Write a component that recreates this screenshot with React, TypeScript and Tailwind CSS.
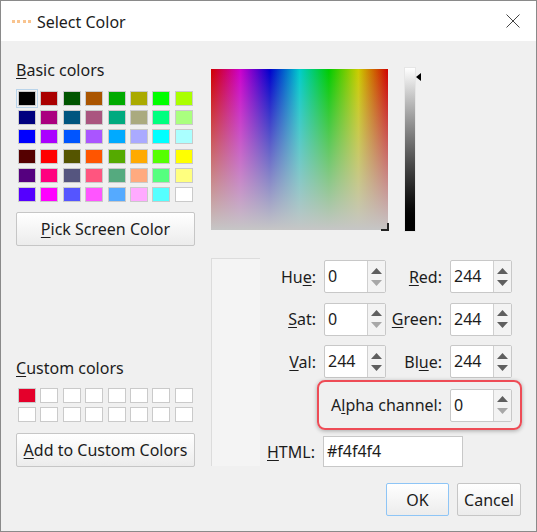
const basic = [
  ['#000000', '#aa0000', '#005500', '#aa5500', '#00aa00', '#aaaa00', '#00ff00', '#aaff00'],
  ['#00007f', '#aa007f', '#00557f', '#aa557f', '#00aa7f', '#aaaa7f', '#00ff7f', '#aaff7f'],
  ['#0000ff', '#aa00ff', '#0055ff', '#aa55ff', '#00aaff', '#aaaaff', '#00ffff', '#aaffff'],
  ['#550000', '#ff0000', '#555500', '#ff5500', '#55aa00', '#ffaa00', '#55ff00', '#ffff00'],
  ['#55007f', '#ff007f', '#55557f', '#ff557f', '#55aa7f', '#ffaa7f', '#55ff7f', '#ffff7f'],
  ['#5500ff', '#ff00ff', '#5555ff', '#ff55ff', '#55aaff', '#ffaaff', '#55ffff', '#ffffff'],
];

const custom = [
  ['#e4002b', '#ffffff', '#ffffff', '#ffffff', '#ffffff', '#ffffff', '#ffffff', '#ffffff'],
  ['#ffffff', '#ffffff', '#ffffff', '#ffffff', '#ffffff', '#ffffff', '#ffffff', '#ffffff'],
];

function Swatches({ rows, selected }: { rows: string[][]; selected?: boolean }) {
  return (
    <div className="flex flex-col gap-[4.2px]">
      {rows.map((row, r) => (
        <div key={r} className="flex gap-[4.4px] pl-[2px]">
          {row.map((c, i) => (
            <div
              key={i}
              className={`w-[18px] h-[15px] border border-[#cacaca] shrink-0 ${
                selected && r === 0 && i === 0 ? 'outline outline-offset-[1px] outline-[#b9d4ea]' : ''
              }`}
              style={{ backgroundColor: c }}
            />
          ))}
        </div>
      ))}
    </div>
  );
}

function Spin({ value, lowDisabled }: { value: string; lowDisabled?: boolean }) {
  return (
    <div className="flex w-[62px] h-[33px] bg-white border border-[#c8c8c8] rounded-[2px] shrink-0">
      <div className="flex-1 pl-[3px] leading-[31px]">{value}</div>
      <div className="w-[18px] flex flex-col items-center justify-center gap-[6px] border-l border-[#d0d0d0] bg-[#f3f3f3]">
        <svg width="11" height="6" viewBox="0 0 11 6">
          <path d="M5.5 0L11 6H0Z" fill="#5f5f5f" />
        </svg>
        <svg width="11" height="6" viewBox="0 0 11 6">
          <path d="M0 0H11L5.5 6Z" fill={lowDisabled ? '#a8a8a8' : '#5f5f5f'} />
        </svg>
      </div>
    </div>
  );
}

function Field({ label, value, lowDisabled }: { label: React.ReactNode; value: string; lowDisabled?: boolean }) {
  return (
    <div className="flex items-center gap-[8px] w-[127px] justify-end">
      <div className="whitespace-nowrap">{label}</div>
      <Spin value={value} lowDisabled={lowDisabled} />
    </div>
  );
}

function PushButton({ children, className = '' }: { children: React.ReactNode; className?: string }) {
  return (
    <div
      className={`flex items-center justify-center border rounded-[2px] bg-gradient-to-b from-white to-[#ececec] ${className}`}
    >
      {children}
    </div>
  );
}

export default function App() {
  return (
    <div
      className="w-[537px] h-[532px] flex flex-col border border-[#8a8a8a] bg-[#f0f0f0] text-[#1c1c1c] text-[16px] overflow-hidden"
      style={{ fontFamily: '"Noto Sans", "Open Sans", sans-serif' }}
    >
      {/* title bar */}
      <div className="h-[40px] bg-white flex items-center shrink-0 pl-[11px] pr-[16px]">
        <div className="flex gap-[2.3px] mr-[6px]">
          <span className="w-[3px] h-[3px] bg-[#f9c48f]" />
          <span className="w-[3px] h-[3px] bg-[#f9c48f]" />
          <span className="w-[3px] h-[3px] bg-[#f9c48f]" />
          <span className="w-[3px] h-[3px] bg-[#f9c48f]" />
        </div>
        <span className="pt-[2px]">Select Color</span>
        <svg className="ml-auto" width="14" height="14" viewBox="0 0 14 14">
          <path d="M.5.5L13.5 13.5M13.5.5L.5 13.5" stroke="#444" strokeWidth="1" fill="none" />
        </svg>
      </div>

      <div className="flex flex-1 pl-[15px] pr-[14px] pt-[15px] gap-[15px]">
        {/* left column */}
        <div className="w-[180px] shrink-0 flex flex-col">
          <div className="leading-[24px] mt-[2px] mb-[9px]">
            <u className="underline-offset-2">B</u>asic colors
          </div>
          <Swatches rows={basic} selected />
          <PushButton className="w-[179px] h-[34px] mt-[10px] border-[#c6c6c6]">
            <span>
              <u className="underline-offset-2">P</u>ick Screen Color
            </span>
          </PushButton>

          <div className="leading-[24px] mt-[110px] mb-[8px]">
            <u className="underline-offset-2">C</u>ustom colors
          </div>
          <Swatches rows={custom} />
          <PushButton className="w-[179px] h-[34px] mt-[11px] border-[#c6c6c6]">
            <span>
              <u className="underline-offset-2">A</u>dd to Custom Colors
            </span>
          </PushButton>
        </div>

        {/* right column */}
        <div className="flex-1 min-w-0 flex flex-col">
          <div className="flex items-start pt-[13px]">
            <div className="relative w-[177px] h-[161px] shrink-0 bg-[linear-gradient(to_right,#d00000,#cc00cc_16.6%,#0000cc_33.3%,#00cccc_50%,#00cc00_66.6%,#cccc00_83.3%,#d00000)]">
              <div className="absolute inset-0 bg-gradient-to-b from-[#c6c6c600] to-[#c6c6c6]" />
              <div className="absolute right-[-1px] bottom-[-1px] w-[8px] h-[8px] border-r-2 border-b-2 border-[#222]" />
            </div>
            <div className="relative ml-[16px] mt-[-2px] w-[12px] h-[165px] border border-[#e6e6e6] bg-gradient-to-b from-white to-black">
              <svg className="absolute left-[11px] top-[5px]" width="5" height="8" viewBox="0 0 5 8">
                <path d="M5 0V8L0 4Z" fill="#000" />
              </svg>
            </div>
          </div>

          <div className="flex mt-[26px]">
            <div className="w-[49px] h-[208px] shrink-0 bg-[#f4f4f4] border-t border-l border-[#dcdcdc]" />
            <div className="flex-1 min-w-0 flex flex-col pt-[2px]">
              <div className="flex flex-col gap-[9.5px] pr-[10px]">
                <div className="flex justify-end">
                  <Field label={<>Hu<u className="underline-offset-2">e</u>:</>} value="0" lowDisabled />
                  <Field label={<><u className="underline-offset-2">R</u>ed:</>} value="244" />
                </div>
                <div className="flex justify-end">
                  <Field label={<><u className="underline-offset-2">S</u>at:</>} value="0" lowDisabled />
                  <Field label={<><u className="underline-offset-2">G</u>reen:</>} value="244" />
                </div>
                <div className="flex justify-end">
                  <Field label={<><u className="underline-offset-2">V</u>al:</>} value="244" />
                  <Field label={<>Bl<u className="underline-offset-2">u</u>e:</>} value="244" />
                </div>
              </div>

              {/* highlighted alpha row */}
              <div className="self-end w-[205px] h-[50px] mt-[2px] border-2 border-[#ee4c56] rounded-[8px] shadow-[0_1px_4px_rgba(0,0,0,0.3)] flex items-center justify-end gap-[8px] pr-[8px]">
                <span>
                  A<u className="underline-offset-2">l</u>pha channel:
                </span>
                <Spin value="0" lowDisabled />
              </div>

              <div className="flex items-center mt-[6px] ml-[7px] gap-[8px]">
                <span>
                  <u className="underline-offset-2">H</u>TML:
                </span>
                <div className="w-[140px] h-[31px] bg-white border border-[#c8c8c8] pl-[3px] leading-[29px]">#f4f4f4</div>
              </div>
            </div>
          </div>

          <div className="flex justify-end gap-[8px] mt-[16px] pr-[1px]">
            <PushButton className="w-[63px] h-[33px] border-[#8ec5f6]">OK</PushButton>
            <PushButton className="w-[64px] h-[33px] border-[#c6c6c6]">Cancel</PushButton>
          </div>
        </div>
      </div>
    </div>
  );
}
